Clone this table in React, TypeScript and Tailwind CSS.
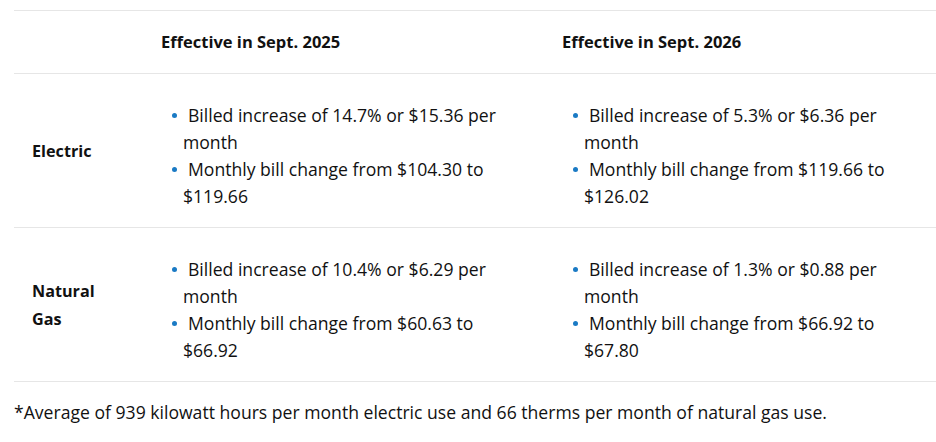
import React from 'react';

interface RateRow {
  label: string[];
  cells: string[][];
}

const rows: RateRow[] = [
  {
    label: ['Electric'],
    cells: [
      ['Billed increase of 14.7% or $15.36 per month', 'Monthly bill change from $104.30 to $119.66'],
      ['Billed increase of 5.3% or $6.36 per month', 'Monthly bill change from $119.66 to $126.02'],
    ],
  },
  {
    label: ['Natural', 'Gas'],
    cells: [
      ['Billed increase of 10.4% or $6.29 per month', 'Monthly bill change from $60.63 to $66.92'],
      ['Billed increase of 1.3% or $0.88 per month', 'Monthly bill change from $66.92 to $67.80'],
    ],
  },
];

const Bullets: React.FC<{ items: string[] }> = ({ items }) => (
  <ul className="w-[345px]">
    {items.map((t, i) => (
      <li key={i} className="relative pl-[22px] indent-[5px] leading-[27px]">
        <span className="absolute left-[11px] top-[11px] w-[5px] h-[5px] rounded-full bg-[#1a7ac4]" />
        {t}
      </li>
    ))}
  </ul>
);

export default function App() {
  return (
    <div className="w-[936px] h-[442px] bg-white text-[#111] text-[17.6px] pl-[14px] pt-[10px]" style={{ fontFamily: '"Open Sans", "Noto Sans", sans-serif' }}>
      <div className="grid grid-cols-[129px_401px_1fr] border-t border-[#e6e6e6]">
        <div className="h-[63px] border-b border-[#e6e6e6]" />
        <div className="h-[63px] border-b border-[#e6e6e6] flex items-center pl-[18px] font-bold text-[16.5px]">Effective in Sept. 2025</div>
        <div className="h-[63px] border-b border-[#e6e6e6] flex items-center pl-[18px] font-bold text-[16.5px]">Effective in Sept. 2026</div>
        {rows.map((r, ri) => (
          <React.Fragment key={ri}>
            <div className="h-[154px] border-b border-[#e6e6e6] flex flex-col justify-center pl-[18px] font-bold text-[16.2px] leading-[28px]">
              {r.label.map((l) => (
                <span key={l}>{l}</span>
              ))}
            </div>
            {r.cells.map((c, ci) => (
              <div key={ci} className="h-[154px] border-b border-[#e6e6e6] flex items-center pl-[18px] pt-[10px]">
                <Bullets items={c} />
              </div>
            ))}
          </React.Fragment>
        ))}
      </div>
      <p className="mt-[17px] leading-[27px]">
        *Average of 939 kilowatt hours per month electric use and 66 therms per month of natural gas use.
      </p>
    </div>
  );
}
